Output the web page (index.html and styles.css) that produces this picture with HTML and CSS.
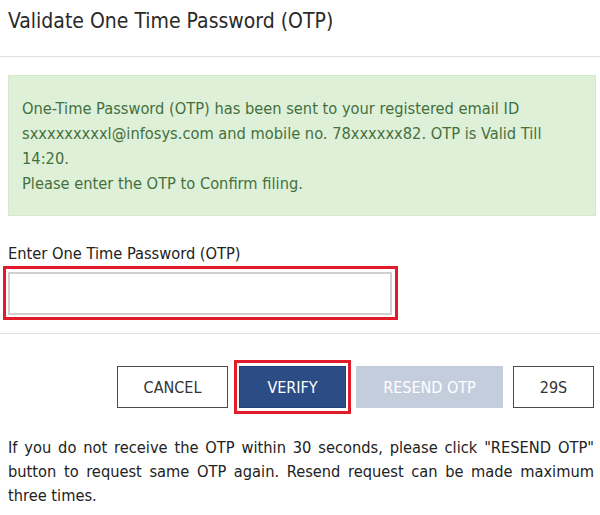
FILE: index.html
```
<!DOCTYPE html>
<html>
<head>
<meta charset="utf-8">
<link rel="stylesheet" href="styles.css">
</head>
<body>
<div class="modal">
  <div class="modal-header">
    <h1 class="title">Validate One Time Password (OTP)</h1>
  </div>
  <div class="modal-body">
    <div class="alert">One-Time Password (OTP) has been sent to your registered email ID sxxxxxxxxxl@infosys.com and mobile no. 78xxxxxx82. OTP is Valid Till 14:20.<br>Please enter the OTP to Confirm filing.</div>
    <label class="field-label">Enter One Time Password (OTP)</label>
    <div class="highlight">
      <input class="otp-input" type="text">
    </div>
  </div>
  <div class="modal-footer">
    <div class="actions">
      <button class="btn btn-outline btn-cancel">CANCEL</button>
      <button class="btn btn-primary">VERIFY</button>
      <button class="btn btn-disabled">RESEND OTP</button>
      <button class="btn btn-outline btn-timer">29S</button>
    </div>
    <p class="note">If you do not receive the OTP within 30 seconds, please click "RESEND OTP" button to request same OTP again. Resend request can be made maximum three times.</p>
  </div>
</div>
</body>
</html>
```
FILE: styles.css
```
* { box-sizing: border-box; }
html, body { margin: 0; padding: 0; background: #fff; }
body {
  font-family: "DejaVu Sans Condensed", "DejaVu Sans", sans-serif;
  color: #222;
  width: 600px;
}
.modal-header {
  height: 57px;
  border-bottom: 1px solid #e0e0e0;
  padding: 7px 8px 0;
}
.title {
  margin: 0;
  font-weight: normal;
  font-size: 21px;
  line-height: 28px;
  color: #2a2a2a;
}
.modal-body {
  padding: 18px 4px 0 3px;
  border-bottom: 1px solid #e0e0e0;
  height: 277px;
}
.alert {
  margin-left: 5px;
  background: #dff0d8;
  border: 1px solid #d6e9c6;
  color: #44703f;
  font-size: 16.3px;
  line-height: 25px;
  padding: 20px 13px 17px;
  height: 141px;
}
.field-label {
  display: block;
  margin: 26px 0 0 5px;
  font-size: 16.3px;
  line-height: 24px;
  color: #222;
}
.highlight {
  width: 395px;
  height: 54px;
  border: 3px solid #e21b2b;
  padding: 3px 3px 2px 2px;
}
.otp-input {
  display: block;
  width: 100%;
  height: 43px;
  border: 2px solid #cfcfcf;
  margin: 0;
  background: #fff;
}
.modal-footer {
  padding: 0 6px 0 8px;
}
.actions {
  display: flex;
  justify-content: flex-end;
  align-items: center;
  gap: 10px;
  margin-top: 32px;
}
.btn {
  height: 42px;
  font-family: "DejaVu Sans Condensed", "DejaVu Sans", sans-serif;
  font-size: 16px;
  padding: 0;
  margin: 0;
  cursor: pointer;
}
.btn-outline {
  background: #fff;
  border: 1px solid #4a4a4a;
  color: #333;
}
.btn-cancel { width: 111px; margin-right: 1px; }
.btn-timer { width: 81px; }
.btn-primary {
  position: relative;
  width: 107px;
  background: #2b4c84;
  border: 1px solid #22407a;
  color: #fff;
}
.btn-primary::after {
  content: "";
  position: absolute;
  top: -7px;
  left: -6px;
  right: -6px;
  bottom: -7px;
  border: 3px solid #e21b2b;
}
.btn-disabled {
  width: 147px;
  background: #c3cddb;
  border: none;
  color: #fff;
}
.note {
  margin: 28px 0 0;
  font-size: 16.3px;
  line-height: 24px;
  text-align: justify;
  color: #222;
}
```
